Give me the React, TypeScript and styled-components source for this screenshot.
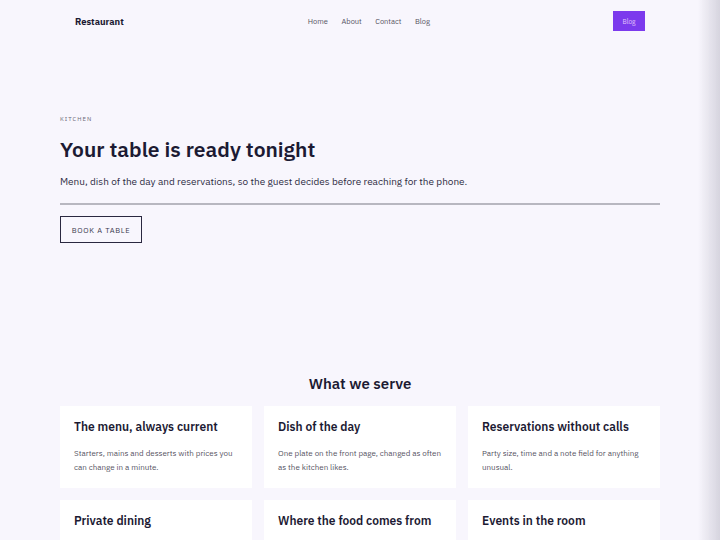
import React from 'react'
import styled, {createGlobalStyle} from 'styled-components'

const GlobalStyle = createGlobalStyle`
html, body {
  margin: 0;
  padding: 0;
  background: #f8f6fd;
  font-family: "IBM Plex Sans", Inter, "Noto Sans", sans-serif;
  color: #1c1a33;
}
* { box-sizing: border-box; }
`

const services = [
  {title: 'The menu, always current', text: 'Starters, mains and desserts with prices you can change in a minute.'},
  {title: 'Dish of the day', text: 'One plate on the front page, changed as often as the kitchen likes.'},
  {title: 'Reservations without calls', text: 'Party size, time and a note field for anything unusual.'},
  {title: 'Private dining', text: 'A separate room for groups, booked with the same form.'},
  {title: 'Where the food comes from', text: 'Farms and suppliers we work with, listed by season.'},
  {title: 'Events in the room', text: 'Tastings, live music and holiday menus on one page.'},
]

export default function App() {
  const links = ['Home', 'About', 'Contact', 'Blog']
  return (
    <>
      <GlobalStyle />
      <SPage>
        <SHeader>
          <SBrand>Restaurant</SBrand>
          <SNav>
            {links.map((l) => (
              <SNavLink key={l} href="#">{l}</SNavLink>
            ))}
          </SNav>
          <SCta href="#">Blog</SCta>
        </SHeader>

        <SHero>
          <SEyebrow>KITCHEN</SEyebrow>
          <STitle>Your table is ready tonight</STitle>
          <SLead>Menu, dish of the day and reservations, so the guest decides before reaching for the phone.</SLead>
          <SRule />
          <SGhostButton>BOOK A TABLE</SGhostButton>
        </SHero>

        <SSection>
          <SSectionTitle>What we serve</SSectionTitle>
          <SGrid>
            {services.map((s) => (
              <SCard key={s.title}>
                <SCardTitle>{s.title}</SCardTitle>
                <SCardText>{s.text}</SCardText>
              </SCard>
            ))}
          </SGrid>
        </SSection>
      </SPage>
      <SEdge />
    </>
  )
}

const SPage = styled.div`
width: 600px;
margin: 0 auto;
`

const SHeader = styled.header`
display: flex;
align-items: center;
height: 42px;
padding: 0 15px;
`

const SBrand = styled.div`
font-size: 9.4px;
font-weight: 700;
color: #1c1a33;
flex: 1;
`

const SNav = styled.nav`
display: flex;
gap: 13.5px;
margin-right: 183px;
`

const SNavLink = styled.a`
font-size: 7.5px;
color: #55535f;
text-decoration: none;
&:visited { color: #55535f; }
`

const SCta = styled.a`
display: flex;
align-items: center;
justify-content: center;
width: 32px;
height: 20px;
background: #7c3aed;
color: #e3c7fb;
font-size: 6.5px;
text-decoration: none;
`

const SHero = styled.section`
padding-top: 73px;
height: 332px;
`

const SEyebrow = styled.div`
font-size: 6px;
line-height: 8px;
letter-spacing: 1px;
color: #6b6a78;
`

const STitle = styled.h1`
margin: 12px 0 0;
font-size: 21px;
font-weight: 600;
line-height: 28px;
color: #1c1a33;
`

const SLead = styled.p`
margin: 12px 0 0;
font-size: 10px;
line-height: 14px;
color: #2e2c44;
`

const SRule = styled.hr`
margin: 14px 0 0;
border: none;
height: 2px;
background: #b8b7c0;
`

const SGhostButton = styled.button`
display: block;
margin-top: 11px;
width: 82px;
height: 27px;
border: 1.5px solid #2a2840;
background: transparent;
font-family: inherit;
font-size: 7.5px;
letter-spacing: 0.7px;
color: #3a384e;
padding: 0;
`

const SSection = styled.section`
display: flex;
flex-direction: column;
align-items: center;
`

const SSectionTitle = styled.h2`
margin: 0 0 12px;
font-size: 15px;
font-weight: 600;
line-height: 20px;
color: #1c1a33;
`

const SGrid = styled.div`
display: grid;
grid-template-columns: repeat(3, 192px);
gap: 12px;
width: 100%;
`

const SCard = styled.div`
background: #fff;
padding: 13px 14px 14px;
height: 82px;
`

const SCardTitle = styled.h3`
margin: 0;
font-size: 12px;
font-weight: 600;
line-height: 16px;
color: #1c1a33;
`

const SCardText = styled.p`
margin: 11px 0 0;
font-size: 8px;
line-height: 14px;
color: #55535f;
`

const SEdge = styled.div`
position: fixed;
top: 0;
right: 0;
width: 22px;
height: 100%;
background: linear-gradient(to right, rgba(200, 198, 210, 0), rgba(200, 198, 210, 0.7));
pointer-events: none;
`
